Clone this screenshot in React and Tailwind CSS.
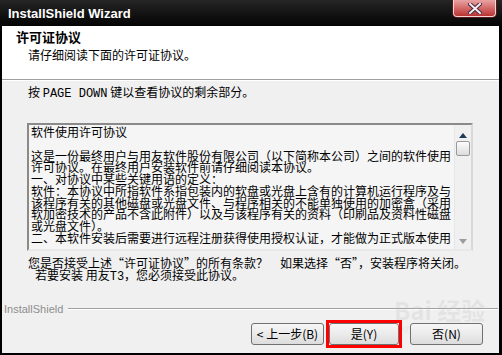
import React from "react";

const cjk = { fontFamily: '"Noto Sans CJK SC", "Liberation Sans", sans-serif' };
const mono = { fontFamily: '"Liberation Mono", "Noto Sans CJK SC", monospace' };

const licenseLines = [
  "软件使用许可协议",
  "",
  "这是一份最终用户与用友软件股份有限公司（以下简称本公司）之间的软件使用",
  "许可协议。在最终用户安装软件前请仔细阅读本协议。",
  "一、对协议中某些关键用语的定义：",
  "软件：本协议中所指软件系指包装内的软盘或光盘上含有的计算机运行程序及与",
  "该程序有关的其他磁盘或光盘文件、与程序相关的不能单独使用的加密盒（采用",
  "软加密技术的产品不含此附件）以及与该程序有关的资料（印刷品及资料性磁盘",
  "或光盘文件）。",
  "二、本软件安装后需要进行远程注册获得使用授权认证，才能做为正式版本使用",
];

function CloseButton() {
  return (
    <div className="absolute right-[6px] top-0 w-[43px] h-[17px] rounded-b-[4px] border border-t-0 border-[#f3d6d6] bg-gradient-to-b from-[#e7a3a3] via-[#d46a6a] to-[#b83232] flex items-center justify-center shadow-[0_0_0_1px_#5a1a1a]">
      <svg width="14" height="11" viewBox="0 0 14 11">
        <path
          d="M2 1 L12 10 M12 1 L2 10"
          stroke="#4a2a3a"
          strokeWidth="4"
          strokeLinecap="square"
        />
        <path
          d="M2 1 L12 10 M12 1 L2 10"
          stroke="#f4eef4"
          strokeWidth="2"
          strokeLinecap="square"
        />
      </svg>
    </div>
  );
}

function Scrollbar() {
  return (
    <div className="w-[17px] bg-[#f0f0f0] border-l border-[#e6e6e6] flex flex-col items-center">
      <div className="h-[16px] flex items-center justify-center pt-[4px]">
        <svg width="8" height="5" viewBox="0 0 8 5">
          <path d="M4 0 L8 5 L0 5 Z" fill="#1f3a5a" />
        </svg>
      </div>
      <div className="w-[14px] h-[15px] rounded-[2px] border border-[#9a9a9a] bg-gradient-to-b from-[#fdfdfd] to-[#dcdcdc]" />
      <div className="flex-1" />
      <div className="h-[14px] flex items-center justify-center pb-[2px]">
        <svg width="8" height="5" viewBox="0 0 8 5">
          <path d="M0 0 L8 0 L4 5 Z" fill="#9c9c9c" />
        </svg>
      </div>
    </div>
  );
}

function Button({ children, className = "" }) {
  return (
    <div
      className={
        "relative z-10 h-[22px] rounded-[3px] border border-[#707070] bg-gradient-to-b from-[#f6f6f6] via-[#ebebeb] to-[#dcdcdc] flex items-center justify-center text-[12px] text-black " +
        className
      }
      style={cjk}
    >
      {children}
    </div>
  );
}

export default function App() {
  return (
    <div className="w-[502px] h-[355px] bg-black flex flex-col overflow-hidden">
      {/* title bar */}
      <div className="relative h-[26px] shrink-0 bg-gradient-to-b from-[#262626] to-[#050505] flex items-center pl-[8px]">
        <span
          className="text-white font-bold text-[13px] leading-none"
          style={{ fontFamily: '"Liberation Sans", Arial, sans-serif' }}
        >
          InstallShield Wizard
        </span>
        <CloseButton />
      </div>

      <div className="flex-1 ml-[2px] mr-[3px] mb-[2px] bg-[#f0f0f0] flex flex-col relative">
        {/* watermark, sits behind the buttons */}
        <div className="absolute left-[392px] top-[272px] pointer-events-none select-none text-[rgba(185,185,185,0.22)]">
          <div className="text-[24px] font-bold leading-none" style={cjk}>Bai 经验</div>
          <div className="text-[9px] leading-none mt-[2px]" style={{ fontFamily: '"Liberation Sans", sans-serif' }}>
            jingyan.baidu.com
          </div>
        </div>

        {/* header */}
        <div className="h-[54px] bg-white border-b border-[#a0a0a0] flex flex-col pt-[3px]" style={cjk}>
          <div className="pl-[14px] text-[13px] font-bold leading-[16px] text-black">许可证协议</div>
          <div className="pl-[26px] mt-[2px] text-[12px] leading-[16px] text-black">请仔细阅读下面的许可证协议。</div>
        </div>
        <div className="h-px bg-white" />

        {/* body */}
        <div className="flex flex-col pt-[3px]">
          <div className="pl-[26px] text-[12px] leading-[16px] text-black whitespace-nowrap" style={cjk}>
            按 <span style={mono} className="text-[12px]">PAGE DOWN</span> 键以查看协议的剩余部分。
          </div>

          <div className="mt-[21px] ml-[25px] w-[446px] h-[128px] border-2 border-t-[#8a8a8a] border-l-[#8a8a8a] border-r-[#d8d8d8] border-b-[#e8e8e8] bg-[#f5f5f5] flex">
            <div className="flex-1 pl-[2px] pt-[1px] overflow-hidden text-[12px] leading-[11.75px] text-black" style={cjk}>
              {licenseLines.map((line, i) => (
                <div key={i} className="h-[11.75px] whitespace-nowrap">
                  {line}
                </div>
              ))}
            </div>
            <Scrollbar />
          </div>

          <div className="mt-[6px] text-[12px] leading-[12px] text-black whitespace-nowrap" style={cjk}>
            <div className="pl-[26px]">您是否接受上述“许可证协议”的所有条款？　如果选择“否”，安装程序将关闭。</div>
            <div className="pl-[33px]">
              若要安装 用友<span style={mono} className="text-[12px]">T3</span>，您必须接受此协议。
            </div>
          </div>

          {/* InstallShield etched line */}
          <div className="mt-[19px] h-[14px] flex items-center">
            <span
              className="pl-[2px] text-[11px] leading-none text-[#8e8e8e]"
              style={{ fontFamily: '"Liberation Sans", Arial, sans-serif' }}
            >
              InstallShield
            </span>
            <div className="flex-1 ml-[5px] mr-[1px] flex flex-col">
              <div className="h-px bg-[#a0a0a0]" />
              <div className="h-px bg-white" />
            </div>
          </div>

          {/* buttons */}
          <div className="mt-[4px] h-[28px] flex items-center pl-[249px]">
            <Button className="w-[73px]">&lt; 上一步(B)</Button>
            <div className="relative z-10 ml-[2px] w-[76px] h-[28px] border-[3px] border-[#ff0000] flex items-center justify-center">
              <Button className="w-[70px]">是(Y)</Button>
            </div>
            <Button className="ml-[8px] w-[73px]">否(N)</Button>
          </div>
        </div>
      </div>
    </div>
  );
}
